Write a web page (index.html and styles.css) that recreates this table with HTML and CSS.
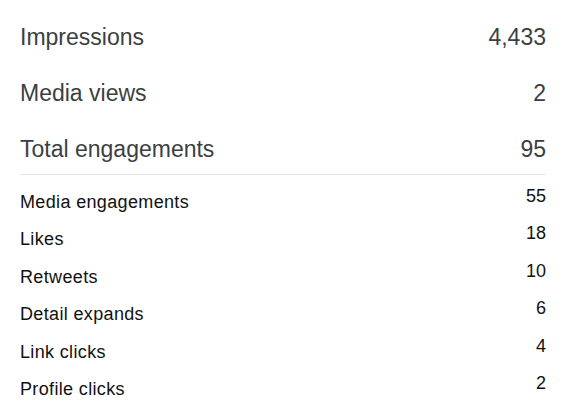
FILE: index.html
```html
<!DOCTYPE html>
<html>
<head>
<meta charset="utf-8">
<link rel="stylesheet" href="styles.css">
</head>
<body>
<div class="stats">
  <div class="big-list">
    <div class="big-row"><span class="label">Impressions</span><span class="value">4,433</span></div>
    <div class="big-row"><span class="label">Media views</span><span class="value">2</span></div>
    <div class="big-row"><span class="label">Total engagements</span><span class="value">95</span></div>
  </div>
  <div class="small-list">
    <div class="small-row"><span class="label">Media engagements</span><span class="value">55</span></div>
    <div class="small-row"><span class="label">Likes</span><span class="value">18</span></div>
    <div class="small-row"><span class="label">Retweets</span><span class="value">10</span></div>
    <div class="small-row"><span class="label">Detail expands</span><span class="value">6</span></div>
    <div class="small-row"><span class="label">Link clicks</span><span class="value">4</span></div>
    <div class="small-row"><span class="label">Profile clicks</span><span class="value">2</span></div>
  </div>
</div>
</body>
</html>
```

FILE: styles.css
```css
html, body {
  margin: 0;
  padding: 0;
  background: #ffffff;
}

body {
  font-family: "Liberation Sans", Arial, Helvetica, sans-serif;
}

.stats {
  padding: 6px 22px 0 20px;
}

.big-row {
  display: flex;
  justify-content: space-between;
  padding: 17px 0 11px;
  font-size: 23px;
  line-height: 28px;
  color: #3b3f42;
}

.small-list {
  border-top: 1px solid #e1e8ed;
  padding-top: 15px;
  display: flex;
  flex-direction: column;
  gap: 13.4px;
}

.small-row {
  display: flex;
  justify-content: space-between;
  align-items: flex-start;
  font-size: 18px;
  color: #111111;
}

.small-row .label {
  line-height: 24px;
  letter-spacing: 0.35px;
}

.small-row .value {
  line-height: 12px;
}
```
